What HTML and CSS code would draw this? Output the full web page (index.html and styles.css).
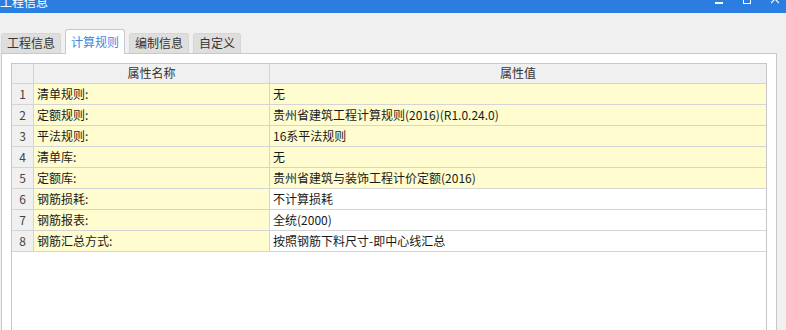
FILE: index.html
```html
<!DOCTYPE html>
<html lang="zh-CN">
<head>
<meta charset="utf-8">
<title>工程信息</title>
<link rel="stylesheet" href="styles.css">
</head>
<body>
<div class="titlebar">
  <span class="title">工程信息</span>
  <div class="controls">
    <svg class="ctl" width="8" height="13" viewBox="0 0 8 13"><rect x="0" y="2" width="8" height="2" fill="#fff"/></svg>
    <svg class="ctl" width="8" height="13" viewBox="0 0 8 13"><rect x="0.5" y="-5.5" width="7" height="9" fill="none" stroke="#fff" stroke-width="1"/></svg>
    <svg class="ctl" width="8" height="13" viewBox="0 0 8 13"><path d="M0 -5 L8 3 M8 -5 L0 3" stroke="#fff" stroke-width="1.2" fill="none"/></svg>
  </div>
</div>
<div class="tabbar">
  <div class="tab">工程信息</div>
  <div class="tab active">计算规则</div>
  <div class="tab">编制信息</div>
  <div class="tab">自定义</div>
</div>
<div class="panel">
  <div class="grid">
    <div class="row head">
      <div class="c num"></div>
      <div class="c name">属性名称</div>
      <div class="c val">属性值</div>
    </div>
    <div class="row"><div class="c num">1</div><div class="c name y">清单规则:</div><div class="c val y">无</div></div>
    <div class="row"><div class="c num">2</div><div class="c name y">定额规则:</div><div class="c val y">贵州省建筑工程计算规则(2016)(R1.0.24.0)</div></div>
    <div class="row"><div class="c num">3</div><div class="c name y">平法规则:</div><div class="c val y">16系平法规则</div></div>
    <div class="row"><div class="c num">4</div><div class="c name y">清单库:</div><div class="c val y">无</div></div>
    <div class="row"><div class="c num">5</div><div class="c name y">定额库:</div><div class="c val y">贵州省建筑与装饰工程计价定额(2016)</div></div>
    <div class="row"><div class="c num">6</div><div class="c name y">钢筋损耗:</div><div class="c val">不计算损耗</div></div>
    <div class="row"><div class="c num">7</div><div class="c name y">钢筋报表:</div><div class="c val">全统(2000)</div></div>
    <div class="row"><div class="c num">8</div><div class="c name y">钢筋汇总方式:</div><div class="c val">按照钢筋下料尺寸-即中心线汇总</div></div>
  </div>
</div>
</body>
</html>
```
FILE: styles.css
```css
* { box-sizing: border-box; }
html, body { margin: 0; padding: 0; }
body {
  width: 786px;
  height: 330px;
  overflow: hidden;
  background: #f0f0f0;
  font-family: "Microsoft YaHei", "Noto Sans CJK SC", "Noto Sans", sans-serif;
  font-size: 12px;
  color: #1a1a1a;
}
.titlebar {
  height: 13px;
  background: #2b7ee0;
  display: flex;
  overflow: hidden;
}
.title {
  color: #fff;
  line-height: 12px;
  margin-top: -4px;
  font-size: 12px;
}
.controls {
  margin-left: auto;
  margin-right: 7px;
  display: flex;
  gap: 20px;
}
.ctl { display: block; overflow: hidden; }
.tabbar {
  height: 40px;
  display: flex;
  align-items: flex-end;
  gap: 4px;
  padding-left: 1px;
}
.tab {
  height: 20px;
  line-height: 18px;
  padding: 0 5px;
  background: #dedede;
  border: 1px solid #d6d6d6;
  border-bottom: none;
  border-radius: 3px 3px 0 0;
  color: #333;
  font-size: 12px;
}
.tab.active {
  height: 25px;
  margin-bottom: -1px;
  padding-top: 2px;
  line-height: 20px;
  background: #fff;
  border-color: #c8c8c8;
  color: #3a8ae4;
  position: relative;
  z-index: 1;
}
.panel {
  margin: 0 9px 0 1px;
  height: 277px;
  background: #fff;
  border: 1px solid #c8c8c8;
  border-bottom: none;
  padding: 9px 9px 0 9px;
}
.grid {
  height: 267px;
  border: 1px solid #c6c6c6;
  border-bottom: none;
  background: #fff;
}
.row {
  display: grid;
  grid-template-columns: 22px 236px 1fr;
  height: 21px;
}
.row.head { height: 20px; }
.c {
  border-right: 1px solid #d4d4d4;
  border-bottom: 1px solid #d4d4d4;
  line-height: 19px;
  padding-left: 3px;
  white-space: nowrap;
  overflow: hidden;
}
.c.val { border-right: none; }
.row.head .c {
  background: #f0f0f0;
  text-align: center;
  padding-left: 0;
  color: #333;
  line-height: 18px;
}
.c.num {
  background: #f0f0f0;
  text-align: center;
  padding-left: 0;
  color: #444;
}
.c.y { background: #fffdcf; }
```
